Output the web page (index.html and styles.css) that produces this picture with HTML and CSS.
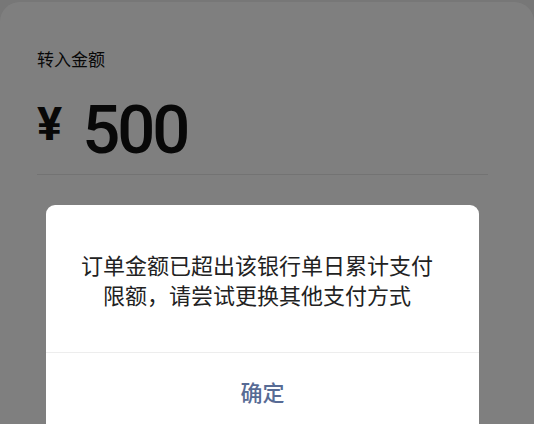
FILE: index.html
```html
<!DOCTYPE html>
<html lang="zh">
<head>
<meta charset="utf-8">
<link rel="stylesheet" href="styles.css">
</head>
<body>
<div class="page">
  <div class="sheet">
    <div class="label">转入金额</div>
    <div class="amount"><span class="yen">¥</span><span class="num">500</span></div>
    <div class="rule"></div>
  </div>
</div>
<div class="mask"></div>
<div class="dialog">
  <div class="msg">订单金额已超出该银行单日累计支付<br>限额，请尝试更换其他支付方式</div>
  <div class="btn">确定</div>
</div>
</body>
</html>
```
FILE: styles.css
```css
html, body {
  margin: 0;
  padding: 0;
  width: 534px;
  height: 424px;
  overflow: hidden;
  background: #eeeeee;
  font-family: "Noto Sans CJK SC", "Noto Sans", sans-serif;
}
.page {
  padding-top: 2px;
}
.sheet {
  background: #ffffff;
  border-radius: 20px 20px 0 0;
  height: 422px;
  padding: 45px 46px 0 37px;
  box-sizing: border-box;
}
.label {
  font-size: 17px;
  line-height: 24px;
  color: #111;
}
.amount {
  display: flex;
  align-items: baseline;
  margin-top: 20px;
  height: 78px;
  color: #111;
}
.yen {
  font-family: Roboto, "DejaVu Sans", sans-serif;
  font-weight: 700;
  font-size: 47px;
  margin-right: 20px;
  position: relative;
  top: -13px;
}
.num {
  font-family: Roboto, "DejaVu Sans", sans-serif;
  font-weight: 500;
  font-size: 67px;
  line-height: 78px;
  letter-spacing: -3px;
}
.rule {
  margin-top: 5px;
  height: 1px;
  background: #e6e6e6;
}
.mask {
  position: absolute;
  inset: 0;
  background: rgba(0, 0, 0, 0.5);
}
.dialog {
  position: absolute;
  left: 46px;
  top: 205px;
  width: 433px;
  height: 240px;
  background: #fff;
  border-radius: 9px;
  display: flex;
  flex-direction: column;
}
.msg {
  height: 148px;
  box-sizing: border-box;
  padding: 44px 11px 0 0;
  text-align: center;
  font-size: 22px;
  line-height: 30px;
  color: #222;
  border-bottom: 1px solid #ededed;
}
.btn {
  text-align: center;
  font-size: 22px;
  line-height: 30px;
  padding-top: 23px;
  color: #576b95;
  font-weight: 500;
}
```
